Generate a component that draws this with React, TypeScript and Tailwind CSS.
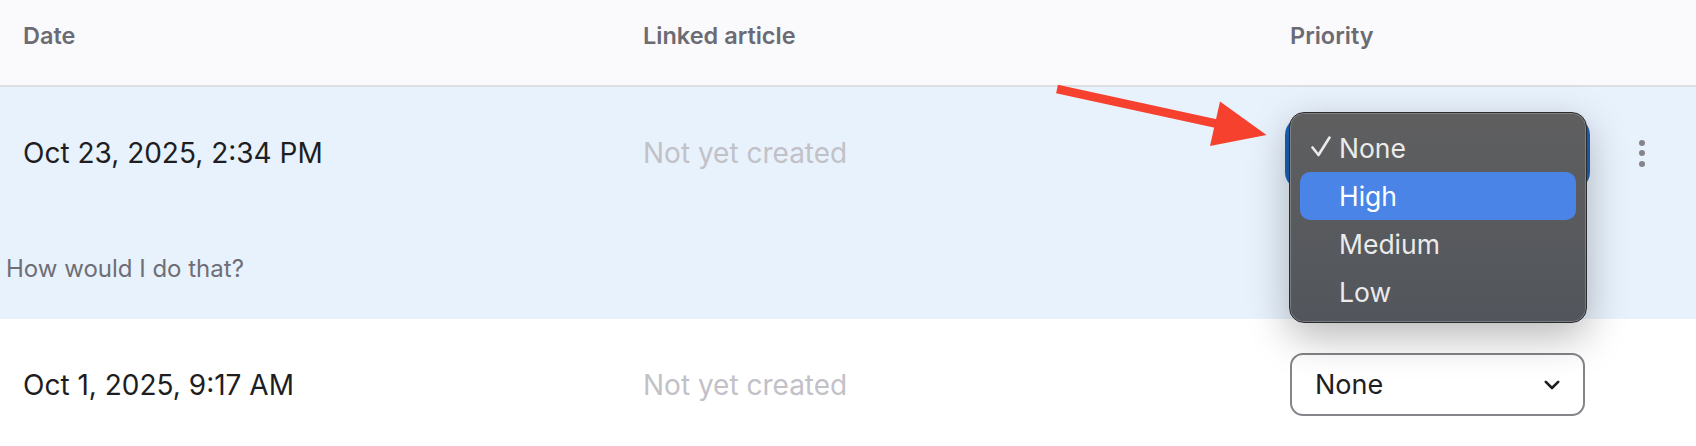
import React from 'react'

type Row = {
  date: string
  note?: string
  open?: boolean
}

const rows: Row[] = [
  { date: 'Oct 23, 2025, 2:34 PM', note: 'How would I do that?', open: true },
  { date: 'Oct 1, 2025, 9:17 AM' },
]

function Chevron() {
  return (
    <svg width="16" height="10" viewBox="0 0 16 10" fill="none">
      <path d="M1.8 1.8 L8 8 L14.2 1.8" stroke="#1e1e22" strokeWidth="2.6" strokeLinecap="round" strokeLinejoin="round" />
    </svg>
  )
}

function Kebab() {
  return (
    <div className="ml-[54px] flex flex-col gap-[4.5px]">
      <span className="h-[6px] w-[6px] rounded-full bg-[#85848b]" />
      <span className="h-[6px] w-[6px] rounded-full bg-[#85848b]" />
      <span className="h-[6px] w-[6px] rounded-full bg-[#85848b]" />
    </div>
  )
}

function PrioritySelect({ focused }: { focused?: boolean }) {
  return (
    <div
      className={
        focused
          ? 'flex h-[63px] w-[295px] items-center justify-between rounded-[13px] border-2 border-[#1b63b7] bg-white pl-[23px] pr-[23px] ring-[5px] ring-[#1b63b7]'
          : 'flex h-[63px] w-[295px] items-center justify-between rounded-[13px] border-2 border-[#858489] bg-white pl-[23px] pr-[23px]'
      }
    >
      {/* the open select's value sits under the menu */}
      <span className={focused ? 'invisible text-[27px] leading-none' : 'text-[27px] leading-none text-[#1e1e22]'}>None</span>
      <Chevron />
    </div>
  )
}

function Menu() {
  const items = ['None', 'High', 'Medium', 'Low']
  return (
    <div className="absolute left-[1289px] top-[112px] h-[211px] w-[298px] rounded-[15px] border border-[#2c2c2e] bg-linear-to-b from-[#5f5f60] to-[#52565c] px-[10px] pb-[8px] pt-[11px] shadow-[inset_0_0_0_1px_rgba(255,255,255,0.22),0_14px_40px_rgba(0,0,0,0.28)]">
      {items.map((item, i) => (
        <div
          key={item}
          className={
            i === 1
              ? 'relative flex h-[48px] items-center rounded-[10px] bg-[#4a84e7] pl-[39px] text-[26.5px] text-white'
              : 'relative flex h-[48px] items-center pl-[39px] text-[26.5px] text-[#ebebeb]'
          }
        >
          {i === 0 && (
            <svg className="absolute left-[11px] top-[12px]" width="20" height="21" viewBox="0 0 20 21" fill="none">
              <path d="M1.5 11.5 L7.5 19 L18.5 1.5" stroke="#ebebeb" strokeWidth="2.6" strokeLinecap="round" strokeLinejoin="round" />
            </svg>
          )}
          <span className="leading-none">{item}</span>
        </div>
      ))}
    </div>
  )
}

function Arrow() {
  return (
    <svg className="absolute left-[1040px] top-[70px]" width="240" height="90" viewBox="0 0 240 90">
      <line x1="17" y1="19" x2="178" y2="54" stroke="#f6412f" strokeWidth="8.5" />
      <polygon points="180,31.5 226.5,65 170,76" fill="#f6412f" />
    </svg>
  )
}

export default function App() {
  return (
    <div className="relative h-[446px] w-[1696px] overflow-hidden bg-white font-['Inter','Noto_Sans',sans-serif]">
      <div className="flex h-[87px] border-b-2 border-[#dedde2] bg-[#fafafc] pl-[23px] pt-[22px] text-[23.5px] font-semibold leading-[28px] text-[#6c6b73]">
        <div className="w-[620px]">Date</div>
        <div className="w-[647px]">Linked article</div>
        <div>Priority</div>
      </div>

      {rows.map((row) => (
        <div key={row.date} className={row.open ? 'bg-[#e8f2fc]' : 'bg-white'}>
          <div className={row.open ? 'flex h-[132px] items-center pl-[23px]' : 'flex h-[131px] items-center pl-[23px]'}>
            <div className="w-[620px] text-[28px] leading-none text-[#1e1e22]">{row.date}</div>
            <div className="w-[647px] text-[28px] leading-none text-[#c2c1c7]">Not yet created</div>
            <PrioritySelect focused={row.open} />
            {row.open && <Kebab />}
          </div>
          {row.note && (
            <div className="flex h-[100px] items-center pl-[6px] text-[24px] leading-none text-[#6f6e76]">{row.note}</div>
          )}
        </div>
      ))}

      <Arrow />
      <Menu />
    </div>
  )
}
